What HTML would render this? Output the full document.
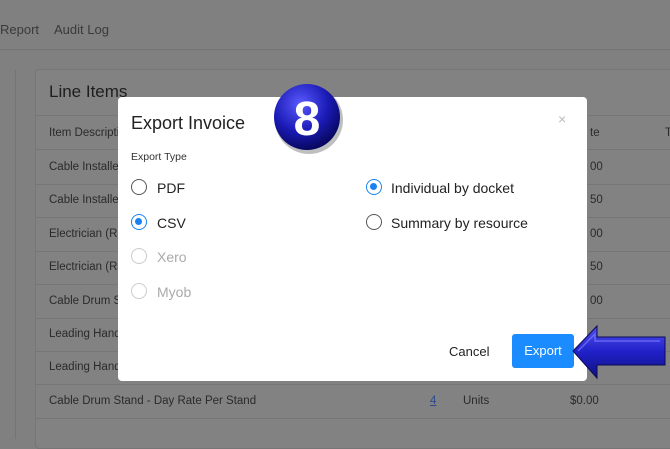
<!DOCTYPE html>
<html><head><meta charset="utf-8"><style>
*{box-sizing:border-box;margin:0;padding:0}
body{width:670px;height:439px;overflow:hidden;background:#808080;font-family:"Liberation Sans",sans-serif;position:relative;color:#222}
.abs{position:absolute}
.t{font-size:11.5px;color:#2a2a2a;position:absolute;white-space:nowrap}
.line{position:absolute;height:1px;background:#767676}
.radio{position:absolute;width:16px;height:16px;border-radius:50%;border:1.5px solid #555;background:#fff}
.radio.on{border-color:#1a82f0}
.radio.on::after{content:"";position:absolute;left:3px;top:3px;width:7px;height:7px;border-radius:50%;background:#1a82f0}
.radio.dis{border-color:#ccc}
.lab{position:absolute;font-size:14px;color:#222;white-space:nowrap}
.lab.dis{color:#aaa}
</style></head><body>
<div class="t" style="left:0;top:22px;font-size:13px;color:#3a3a3a">Report</div>
<div class="t" style="left:54px;top:22px;font-size:13px;color:#3a3a3a">Audit Log</div>
<div class="line" style="left:0;top:49px;width:670px;background:#747474"></div>
<div class="abs" style="left:15px;top:70px;width:1px;height:369px;background:#747474"></div>
<div class="abs" style="left:35px;top:69px;width:640px;height:380px;border:1px solid #767676;border-radius:4px;background:#828282"></div>
<div class="t" style="left:49px;top:82px;font-size:17px;color:#1e1e1e">Line Items</div>
<div class="line" style="left:36px;top:115px;width:634px"></div>
<div class="line" style="left:36px;top:149px;width:634px"></div>
<div class="t" style="left:49px;top:127px">Item Description</div>
<div class="t" style="left:590px;top:127px">te</div>
<div class="t" style="left:665px;top:127px">T</div>
<div class="t" style="left:49px;top:161px">Cable Installer</div><div class="t" style="left:590px;top:161px">00</div>
<div class="line" style="left:36px;top:184px;width:634px"></div>
<div class="t" style="left:49px;top:194px">Cable Installer</div><div class="t" style="left:590px;top:194px">50</div>
<div class="line" style="left:36px;top:217px;width:634px"></div>
<div class="t" style="left:49px;top:228px">Electrician (Ra</div><div class="t" style="left:590px;top:228px">00</div>
<div class="line" style="left:36px;top:251px;width:634px"></div>
<div class="t" style="left:49px;top:261px">Electrician (Ra</div><div class="t" style="left:590px;top:261px">50</div>
<div class="line" style="left:36px;top:284px;width:634px"></div>
<div class="t" style="left:49px;top:295px">Cable Drum St</div><div class="t" style="left:590px;top:295px">00</div>
<div class="line" style="left:36px;top:318px;width:634px"></div>
<div class="t" style="left:49px;top:328px">Leading Hand</div>
<div class="line" style="left:36px;top:351px;width:634px"></div>
<div class="t" style="left:49px;top:361px">Leading Hand</div>
<div class="line" style="left:36px;top:384px;width:634px"></div>
<div class="t" style="left:49px;top:395px">Cable Drum Stand - Day Rate Per Stand</div>
<div class="t" style="left:430px;top:395px;color:#2a4a8a;text-decoration:underline">4</div>
<div class="t" style="left:463px;top:395px">Units</div>
<div class="t" style="left:570px;top:395px">$0.00</div>
<div class="line" style="left:36px;top:418px;width:634px"></div>

<div class="abs" style="left:118px;top:97px;width:469px;height:284px;background:#fff;border-radius:4px"></div>
<div class="abs" style="left:131px;top:113px;font-size:18px;color:#222">Export Invoice</div>
<div class="abs" style="left:558px;top:111px;font-size:14px;color:#bbb">×</div>
<div class="abs" style="left:131px;top:151px;font-size:10.5px;color:#333">Export Type</div>
<div class="radio" style="left:131px;top:179px"></div><div class="lab" style="left:157px;top:180px">PDF</div>
<div class="radio on" style="left:131px;top:214px"></div><div class="lab" style="left:157px;top:215px">CSV</div>
<div class="radio dis" style="left:131px;top:248px"></div><div class="lab dis" style="left:157px;top:249px">Xero</div>
<div class="radio dis" style="left:131px;top:283px"></div><div class="lab dis" style="left:157px;top:284px">Myob</div>
<div class="radio on" style="left:366px;top:179px"></div><div class="lab" style="left:391px;top:180px">Individual by docket</div>
<div class="radio" style="left:366px;top:214px"></div><div class="lab" style="left:391px;top:215px">Summary by resource</div>
<div class="abs" style="left:449px;top:344px;font-size:13px;color:#222">Cancel</div>
<div class="abs" style="left:512px;top:334px;width:62px;height:34px;background:#1a8cff;border-radius:3px;color:#fff;font-size:13px;text-align:center;line-height:34px">Export</div>

<svg class="abs" style="left:0;top:0" width="670" height="439">
<defs>
<radialGradient id="g" cx="40%" cy="30%" r="70%"><stop offset="0" stop-color="#5a5aff"/><stop offset="0.6" stop-color="#1a1ab5"/><stop offset="1" stop-color="#080860"/></radialGradient>
<linearGradient id="a" x1="0" y1="0" x2="0" y2="1"><stop offset="0" stop-color="#5050f0"/><stop offset="0.5" stop-color="#2020c8"/><stop offset="1" stop-color="#101080"/></linearGradient>
</defs>
<circle cx="309" cy="120" r="34" fill="#000" opacity="0.25"/>
<circle cx="307" cy="117" r="33" fill="url(#g)"/>
<text x="307" y="135" text-anchor="middle" font-family="Liberation Sans" font-weight="bold" font-size="48" fill="#fff">8</text>
<path d="M573 351 L597 326 L597 337 L665 337 L665 365 L597 365 L597 378 Z" fill="url(#a)" stroke="#0a0a55" stroke-width="1"/>
<path d="M578 351 L595 334 L595 341 L660 341" fill="none" stroke="#7a7aff" stroke-width="1.5" opacity="0.7"/>
</svg>
</body></html>
